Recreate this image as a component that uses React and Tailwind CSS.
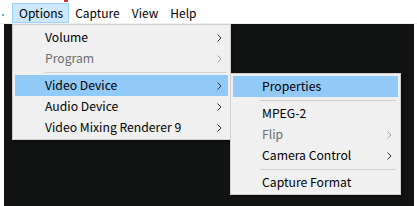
import React from "react";

const font = { fontFamily: '"Noto Sans CJK SC", "Noto Sans", sans-serif' };

function Chevron({ dim }) {
  return (
    <svg width="5" height="8" viewBox="0 0 5 8" className="shrink-0">
      <path
        d="M0.5 0.5 L4 4 L0.5 7.5"
        fill="none"
        stroke={dim ? "#a0a0a0" : "#303030"}
        strokeWidth="1"
      />
    </svg>
  );
}

function Item({ label, active, disabled, arrow, pl = "pl-[30px]" }) {
  return (
    <div
      className={`flex items-center h-[21px] ${pl} pr-[6px] ${
        active ? "bg-[#91c9f7]" : ""
      } ${disabled ? "text-[#6d6d6d]" : "text-black"}`}
    >
      <span className="grow text-[12.2px] leading-none">{label}</span>
      {arrow && <Chevron dim={disabled} />}
    </div>
  );
}

function Sep({ ml }) {
  return (
    <div className="h-[6px] flex items-center">
      <div className={`h-px grow bg-[#d2d2d2] ${ml} mr-[2px]`} />
    </div>
  );
}

export default function App() {
  return (
    <div className="relative w-[417px] h-[206px] bg-white overflow-hidden" style={font}>
      {/* menu bar */}
      <div className="h-[24px] flex items-end border-b border-[#f0f0f0] relative">
        <div className="absolute left-[64px] top-0 w-[4px] h-[2px] bg-[#d83030]" />
        <div className="absolute left-[2px] top-[14px] w-[2px] h-[2px] bg-[#6aa8d8]" />
        <div className="flex items-center h-[20px] ml-[12px] text-[12px] text-black">
          <div className="h-[20px] pl-[6px] pr-[5px] flex items-center bg-[#cce8ff] border border-[#99d1ff]">
            Options
          </div>
          <div className="px-[6px]">Capture</div>
          <div className="px-[6px]">View</div>
          <div className="px-[6px]">Help</div>
        </div>
      </div>

      {/* dark client area */}
      <div className="ml-[4px] w-[410px] h-[182px] bg-[#111212]" />

      {/* main dropdown */}
      <div className="absolute left-[12px] top-[24px] w-[219px] bg-[#f0f0f0] border border-[#cfcfcf] p-[2px] pb-[1px] shadow-[2px_2px_2px_rgba(0,0,0,0.25)]">
        <Item label="Volume" arrow />
        <Item label="Program" arrow disabled />
        <Sep ml="ml-[30px]" />
        <Item label="Video Device" arrow active />
        <Item label="Audio Device" arrow />
        <Item label="Video Mixing Renderer 9" arrow />
      </div>

      {/* sub menu */}
      <div className="absolute left-[230px] top-[73px] w-[171px] bg-[#f0f0f0] border border-[#cfcfcf] p-[2px] pb-[1px] shadow-[2px_2px_2px_rgba(0,0,0,0.25)]">
        <Item label="Properties" active pl="pl-[29px]" />
        <Sep ml="ml-[27px]" />
        <Item label="MPEG-2" pl="pl-[29px]" />
        <Item label="Flip" arrow disabled pl="pl-[29px]" />
        <Item label="Camera Control" arrow pl="pl-[29px]" />
        <Sep ml="ml-[27px]" />
        <Item label="Capture Format" pl="pl-[29px]" />
      </div>
    </div>
  );
}
